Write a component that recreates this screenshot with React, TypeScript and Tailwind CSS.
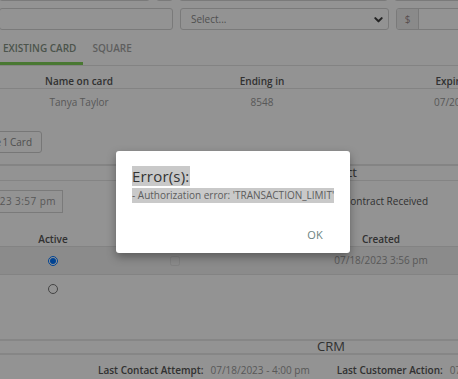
import React from "react";

const font = { fontFamily: '"Open Sans", "Liberation Sans", sans-serif' };

function Radio({ checked }: { checked?: boolean }) {
  return (
    <input
      type="radio"
      checked={!!checked}
      readOnly
      className="w-[10px] h-[10px] m-0"
    />
  );
}

export default function App() {
  return (
    <div className="relative w-[458px] h-[379px] overflow-hidden bg-white text-[10px]" style={font}>
      {/* Page behind the dialog */}
      <div className="w-[458px]">
        {/* previous input row, only its bottom edge shows */}
        <div className="flex gap-[6px] h-[22px] -mt-[21px]">
          <div className="w-[151px] -ml-[1px] shrink-0 border border-[#d4d4d4] rounded-[3px]" />
          <div className="w-[17px] shrink-0 border border-[#d4d4d4] rounded-[3px]" />
          <div className="w-[209px] shrink-0 border border-[#d4d4d4] rounded-[3px]" />
          <div className="w-[80px] shrink-0 border border-[#d4d4d4] rounded-[3px]" />
        </div>

        {/* input row */}
        <div className="flex gap-[7px] h-[22px] mt-[7px]">
          <div className="w-[174px] -ml-[1px] shrink-0 border border-[#d4d4d4] rounded-[3px]" />
          <div className="w-[209px] shrink-0 border border-[#d4d4d4] rounded-[3px] flex items-center justify-between pl-[10px] pr-[4px] text-[#8c8c8c]">
            <span>Select...</span>
            <svg width="11" height="11" viewBox="0 0 24 24" fill="none" stroke="#3f3f3f" strokeWidth="4.5" strokeLinecap="round" strokeLinejoin="round">
              <path d="M5 9l7 7 7-7" />
            </svg>
          </div>
          <div className="flex shrink-0 w-[80px] border border-[#d4d4d4] rounded-[3px] overflow-hidden">
            <div className="w-[22px] bg-[#f0f0f0] border-r border-[#d4d4d4] flex items-center justify-center text-[#9a8a8a]">$</div>
            <div className="flex-1" />
          </div>
        </div>

        {/* tabs */}
        <div className="flex border-b border-[#e4e4e4] font-semibold uppercase">
          <div className="h-[35px] -ml-[4px] px-[7px] pt-[4px] flex items-center border-b-[3px] border-[#7fd058] text-[#849284]">
            Existing Card
          </div>
          <div className="h-[35px] ml-[2px] px-[7px] pt-[4px] flex items-center border-b-[3px] border-transparent text-[#a4a4a4]">
            Square
          </div>
        </div>

        {/* cards table */}
        <div className="-ml-[13px]">
          <div className="flex mt-[9px] h-[14px] items-center border-b border-[#e4e4e4] font-semibold text-[#555]">
            <div className="w-[184px] shrink-0 text-center">Name on card</div>
            <div className="w-[182px] shrink-0 text-center">Ending in</div>
            <div className="w-[200px] shrink-0 text-center">Expires</div>
          </div>
          <div className="flex h-[27px] items-center text-[#999]">
            <div className="w-[184px] shrink-0 text-center">Tanya Taylor</div>
            <div className="w-[182px] shrink-0 text-center">8548</div>
            <div className="w-[200px] shrink-0 text-center">07/2025</div>
          </div>
        </div>

        <div className="w-[42px] flex justify-end mt-[15px]">
          <button className="shrink-0 h-[22px] pl-[8px] pr-[9px] border border-[#cfcfcf] rounded-[3px] text-[#8a8a8a] whitespace-nowrap [word-spacing:-1px]">
            Charge 1 Card
          </button>
        </div>

        {/* contract section */}
        <div className="mt-[11px] w-[662px] border-t-2 border-b border-[#e6e6e6] h-[17px] flex items-center justify-center text-[13px] text-[#555]">
          Contract
        </div>
        <div className="flex items-center mt-[9px] h-[23px]">
          <div className="w-[63px] shrink-0 flex justify-end">
            <div className="shrink-0 h-[23px] pl-[7px] pr-[6px] border border-[#d4d4d4] flex items-center text-[#999] whitespace-nowrap tracking-[0.45px]">
              07/18/2023 3:57 pm
            </div>
          </div>
          <div className="ml-[267px] flex items-center gap-[4px] text-[#555] whitespace-nowrap">
            <input type="checkbox" readOnly className="w-[10px] h-[10px] m-0" />
            <span>Contract Received</span>
          </div>
        </div>

        <div className="flex mt-[19px] h-[15px] items-center border-b border-[#e4e4e4] font-semibold text-[#555]">
          <div className="w-[106px] shrink-0 text-center">Active</div>
          <div className="w-[138px] shrink-0 text-center">Signed</div>
          <div className="w-[274px] shrink-0 text-center">Created</div>
        </div>
        <div className="flex h-[28px] items-center bg-[#f1f1f1] border-b border-[#e4e4e4] text-[#999]">
          <div className="w-[106px] shrink-0 flex justify-center"><Radio checked /></div>
          <div className="w-[138px] shrink-0 flex justify-center">
            <input type="checkbox" readOnly disabled className="w-[10px] h-[10px] m-0 opacity-40" />
          </div>
          <div className="w-[274px] shrink-0 text-center">07/18/2023 3:56 pm</div>
        </div>
        <div className="flex h-[28px] items-center">
          <div className="w-[106px] shrink-0 flex justify-center"><Radio /></div>
        </div>

        {/* CRM section */}
        <div className="mt-[36px] w-[662px] border-t-2 border-b-2 border-[#e9e9e9] h-[16px] flex items-center justify-center text-[13px] text-[#555]">
          CRM
        </div>
        <div className="flex items-center h-[30px] ml-[98px] whitespace-nowrap">
          <span className="font-semibold text-[#555]">Last Contact Attempt:</span>
          <span className="ml-[7px] text-[#999]">07/18/2023 - 4:00 pm</span>
          <span className="ml-[27px] font-semibold text-[#555]">Last Customer Action:</span>
          <span className="ml-[7px] text-[#999]">07/18/2023 - 3:56 pm</span>
        </div>
      </div>

      {/* backdrop */}
      <div className="absolute inset-0 bg-[rgba(0,0,0,0.424)]" />

      {/* dialog */}
      <div className="absolute left-[116px] top-[151px] w-[234px] h-[102px] bg-white rounded-[3px] shadow-[0_4px_10px_rgba(0,0,0,0.35)] pl-[16px] pt-[15px] pr-[16px] flex flex-col">
        <div>
          <span className="bg-[#c9c9c9] text-[15px] leading-[20px] text-[#333] inline-block tracking-[0.2px]">Error(s):</span>
        </div>
        <div className="mt-[2px]">
          <span className="bg-[#c9c9c9] text-[#5c5c5c] leading-[15px] inline-block whitespace-nowrap">- Authorization error: 'TRANSACTION_LIMIT'</span>
        </div>
        <div className="flex justify-end mt-auto mb-[10px]">
          <button className="text-[11px] text-[#6b8380] pl-[12px] pr-[11px] h-[16px] tracking-wide">OK</button>
        </div>
      </div>
    </div>
  );
}
